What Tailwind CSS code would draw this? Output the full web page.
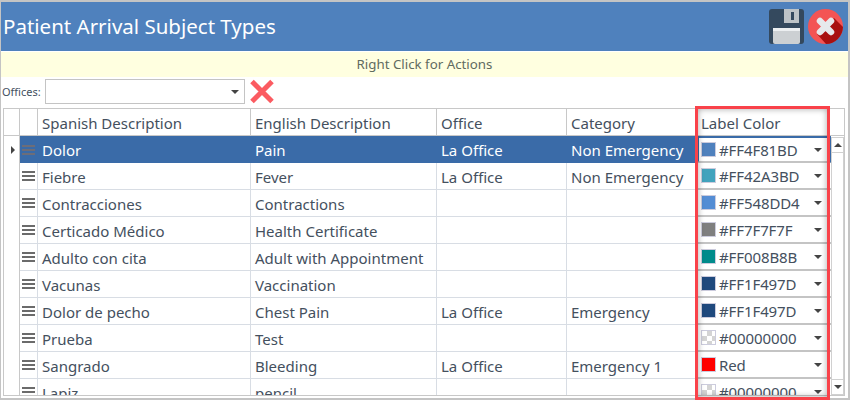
<!DOCTYPE html>
<html><head><script src="https://cdn.jsdelivr.net/npm/@tailwindcss/browser@4"></script></head>
<body class="bg-white">
<div class="relative w-[850px] h-[400px] overflow-hidden bg-white font-['Noto_Sans','Open_Sans',sans-serif] text-[#44505e]">
  <div class="flex flex-col h-[400px] border-t-2 border-l border-r-2 border-b-2 border-[#c4c4c4]">
    <header class="h-[49px] shrink-0 bg-[#4f81bd] flex items-center justify-between pl-[2px] pr-[5px]">
      <h1 class="text-[20.5px] text-white">Patient Arrival Subject Types</h1>
      <div class="flex items-center gap-[4px]">
        <svg width="35" height="35" viewBox="0 0 35 35"><rect width="35" height="35" rx="3" fill="#34495e"/><rect x="15" y="0" width="15" height="14" fill="#bdc3c7"/><rect x="22" y="3" width="3" height="8" fill="#34495e"/><rect x="4" y="19" width="27" height="16" rx="2" fill="#ccd0d3"/><rect x="4" y="19" width="27" height="3" fill="#eceff1"/></svg>
        <svg width="35" height="35" viewBox="0 0 35 35"><circle cx="17.5" cy="17.5" r="17.5" fill="#f35454"/><path d="M9 25 L18 35 A17.5 17.5 0 0 0 35 18 L26 9z" fill="#a81010"/><path d="M12 12L23 23M23 12L12 23" stroke="#e6e9ec" stroke-width="6.5" stroke-linecap="round"/></svg>
      </div>
    </header>
    <div class="mt-px h-[25px] shrink-0 bg-[#ffffe0] flex items-center justify-center text-[13.3px] text-[#5f6b5f]">Right Click for Actions</div>
    <div class="h-[31px] shrink-0 flex items-start pt-[2px]">
      <span class="text-[11px] w-[44px] pl-px leading-[25px]">Offices:</span>
      <div class="w-[200px] h-[25px] border border-[#c4c4c4] flex items-center justify-end pr-[5px]"><span class="w-0 h-0 border-x-4 border-t-4 border-x-transparent border-t-[#444]"></span></div>
      <svg class="ml-[4px]" width="26" height="25" viewBox="0 0 26 25"><path d="M3 2.5L23 22.5M23 2.5L3 22.5" stroke="#fb5b61" stroke-width="5"/></svg>
    </div>
    <div class="flex-1 min-h-0 ml-[2px] mr-[3px] mb-[2px] border border-[#c8c8c8] flex flex-col text-[15px] overflow-hidden">
      <div class="grid grid-cols-[16px_18px_213px_186px_130px_130px_1fr] grid-rows-[26px] h-[27px] shrink-0 border-b border-[#c8c8c8] leading-[28px]">
        <div class="border-r border-[#c8c8c8]"></div><div class="border-r border-[#c8c8c8]"></div>
        <div class="border-r border-[#c8c8c8] pl-[4px]">Spanish Description</div>
        <div class="border-r border-[#c8c8c8] pl-[4px]">English Description</div>
        <div class="border-r border-[#c8c8c8] pl-[4px]">Office</div>
        <div class="border-r border-[#c8c8c8] pl-[4px]">Category</div>
        <div class="pl-[4px]">Label Color</div>
      </div>
      <div class="flex-1 min-h-0 flex overflow-hidden">
        <div class="w-[827px] shrink-0">

          <div class="grid grid-cols-[16px_18px_213px_186px_130px_130px_134px] grid-rows-[27px] h-[27px] leading-[28px] text-white">
            <div class="border-r border-[#c8c8c8] flex items-center justify-center text-[#444]"><span class="w-0 h-0 border-y-[4px] border-l-[4px] border-y-transparent border-l-[#444] ml-[2px]"></span></div>
            <div class="bg-[#3a6ba8] flex flex-col items-center justify-center gap-[2px] pr-px"><i class="block w-[13px] h-[2px] bg-[#6d6d78]"></i><i class="block w-[13px] h-[2px] bg-[#6d6d78]"></i><i class="block w-[13px] h-[2px] bg-[#6d6d78]"></i></div>
            <div class="bg-[#3a6ba8] pl-[4px]">Dolor</div>
            <div class="bg-[#3a6ba8] pl-[4px]">Pain</div>
            <div class="bg-[#3a6ba8] pl-[4px]">La Office</div>
            <div class="bg-[#3a6ba8] pl-[4px]">Non Emergency</div>
            <div class="border-2 border-[#3a6ba8] border-b-[#c4c4c4] flex items-center pl-[2px] pr-[7px] text-[#44505e]"><i class="block w-[15px] h-[15px] border border-[#ccd] bg-[#4f81bd] mr-[3px]"></i><span class="flex-1 tracking-[-0.1px] leading-[24px]">#FF4F81BD</span><span class="w-0 h-0 border-x-4 border-t-4 border-x-transparent border-t-[#444]"></span></div>
          </div>

          <div class="grid grid-cols-[16px_18px_213px_186px_130px_130px_134px] grid-rows-[27px] h-[27px] leading-[28px]">
            <div class="border-r border-[#c8c8c8]"></div>
            <div class="border-r border-b border-[#d8dde4] flex flex-col items-center justify-center gap-[2px]"><i class="block w-[13px] h-[2px] bg-[#6b6b6b]"></i><i class="block w-[13px] h-[2px] bg-[#6b6b6b]"></i><i class="block w-[13px] h-[2px] bg-[#6b6b6b]"></i></div>
            <div class="border-r border-b border-[#d8dde4] pl-[4px]">Fiebre</div>
            <div class="border-r border-b border-[#d8dde4] pl-[4px]">Fever</div>
            <div class="border-r border-b border-[#d8dde4] pl-[4px]">La Office</div>
            <div class="border-r border-b border-[#d8dde4] pl-[4px]">Non Emergency</div>
            <div class="border-b-2 border-[#c4c4c4] flex items-center pl-[4px] pr-[9px]"><i class="block w-[15px] h-[15px] border border-[#ccd] bg-[#42a3bd] mr-[3px]"></i><span class="flex-1 tracking-[-0.1px] leading-[24px]">#FF42A3BD</span><span class="w-0 h-0 border-x-4 border-t-4 border-x-transparent border-t-[#444]"></span></div>
          </div>

          <div class="grid grid-cols-[16px_18px_213px_186px_130px_130px_134px] grid-rows-[27px] h-[27px] leading-[28px]">
            <div class="border-r border-[#c8c8c8]"></div>
            <div class="border-r border-b border-[#d8dde4] flex flex-col items-center justify-center gap-[2px]"><i class="block w-[13px] h-[2px] bg-[#6b6b6b]"></i><i class="block w-[13px] h-[2px] bg-[#6b6b6b]"></i><i class="block w-[13px] h-[2px] bg-[#6b6b6b]"></i></div>
            <div class="border-r border-b border-[#d8dde4] pl-[4px]">Contracciones</div>
            <div class="border-r border-b border-[#d8dde4] pl-[4px]">Contractions</div>
            <div class="border-r border-b border-[#d8dde4] pl-[4px]"></div>
            <div class="border-r border-b border-[#d8dde4] pl-[4px]"></div>
            <div class="border-b-2 border-[#c4c4c4] flex items-center pl-[4px] pr-[9px]"><i class="block w-[15px] h-[15px] border border-[#ccd] bg-[#548dd4] mr-[3px]"></i><span class="flex-1 tracking-[-0.1px] leading-[24px]">#FF548DD4</span><span class="w-0 h-0 border-x-4 border-t-4 border-x-transparent border-t-[#444]"></span></div>
          </div>

          <div class="grid grid-cols-[16px_18px_213px_186px_130px_130px_134px] grid-rows-[27px] h-[27px] leading-[28px]">
            <div class="border-r border-[#c8c8c8]"></div>
            <div class="border-r border-b border-[#d8dde4] flex flex-col items-center justify-center gap-[2px]"><i class="block w-[13px] h-[2px] bg-[#6b6b6b]"></i><i class="block w-[13px] h-[2px] bg-[#6b6b6b]"></i><i class="block w-[13px] h-[2px] bg-[#6b6b6b]"></i></div>
            <div class="border-r border-b border-[#d8dde4] pl-[4px]">Certicado Médico</div>
            <div class="border-r border-b border-[#d8dde4] pl-[4px]">Health Certificate</div>
            <div class="border-r border-b border-[#d8dde4] pl-[4px]"></div>
            <div class="border-r border-b border-[#d8dde4] pl-[4px]"></div>
            <div class="border-b-2 border-[#c4c4c4] flex items-center pl-[4px] pr-[9px]"><i class="block w-[15px] h-[15px] border border-[#ccd] bg-[#7f7f7f] mr-[3px]"></i><span class="flex-1 tracking-[-0.1px] leading-[24px]">#FF7F7F7F</span><span class="w-0 h-0 border-x-4 border-t-4 border-x-transparent border-t-[#444]"></span></div>
          </div>

          <div class="grid grid-cols-[16px_18px_213px_186px_130px_130px_134px] grid-rows-[27px] h-[27px] leading-[28px]">
            <div class="border-r border-[#c8c8c8]"></div>
            <div class="border-r border-b border-[#d8dde4] flex flex-col items-center justify-center gap-[2px]"><i class="block w-[13px] h-[2px] bg-[#6b6b6b]"></i><i class="block w-[13px] h-[2px] bg-[#6b6b6b]"></i><i class="block w-[13px] h-[2px] bg-[#6b6b6b]"></i></div>
            <div class="border-r border-b border-[#d8dde4] pl-[4px]">Adulto con cita</div>
            <div class="border-r border-b border-[#d8dde4] pl-[4px]">Adult with Appointment</div>
            <div class="border-r border-b border-[#d8dde4] pl-[4px]"></div>
            <div class="border-r border-b border-[#d8dde4] pl-[4px]"></div>
            <div class="border-b-2 border-[#c4c4c4] flex items-center pl-[4px] pr-[9px]"><i class="block w-[15px] h-[15px] border border-[#ccd] bg-[#008b8b] mr-[3px]"></i><span class="flex-1 tracking-[-0.1px] leading-[24px]">#FF008B8B</span><span class="w-0 h-0 border-x-4 border-t-4 border-x-transparent border-t-[#444]"></span></div>
          </div>

          <div class="grid grid-cols-[16px_18px_213px_186px_130px_130px_134px] grid-rows-[27px] h-[27px] leading-[28px]">
            <div class="border-r border-[#c8c8c8]"></div>
            <div class="border-r border-b border-[#d8dde4] flex flex-col items-center justify-center gap-[2px]"><i class="block w-[13px] h-[2px] bg-[#6b6b6b]"></i><i class="block w-[13px] h-[2px] bg-[#6b6b6b]"></i><i class="block w-[13px] h-[2px] bg-[#6b6b6b]"></i></div>
            <div class="border-r border-b border-[#d8dde4] pl-[4px]">Vacunas</div>
            <div class="border-r border-b border-[#d8dde4] pl-[4px]">Vaccination</div>
            <div class="border-r border-b border-[#d8dde4] pl-[4px]"></div>
            <div class="border-r border-b border-[#d8dde4] pl-[4px]"></div>
            <div class="border-b-2 border-[#c4c4c4] flex items-center pl-[4px] pr-[9px]"><i class="block w-[15px] h-[15px] border border-[#ccd] bg-[#1f497d] mr-[3px]"></i><span class="flex-1 tracking-[-0.1px] leading-[24px]">#FF1F497D</span><span class="w-0 h-0 border-x-4 border-t-4 border-x-transparent border-t-[#444]"></span></div>
          </div>

          <div class="grid grid-cols-[16px_18px_213px_186px_130px_130px_134px] grid-rows-[27px] h-[27px] leading-[28px]">
            <div class="border-r border-[#c8c8c8]"></div>
            <div class="border-r border-b border-[#d8dde4] flex flex-col items-center justify-center gap-[2px]"><i class="block w-[13px] h-[2px] bg-[#6b6b6b]"></i><i class="block w-[13px] h-[2px] bg-[#6b6b6b]"></i><i class="block w-[13px] h-[2px] bg-[#6b6b6b]"></i></div>
            <div class="border-r border-b border-[#d8dde4] pl-[4px]">Dolor de pecho</div>
            <div class="border-r border-b border-[#d8dde4] pl-[4px]">Chest Pain</div>
            <div class="border-r border-b border-[#d8dde4] pl-[4px]">La Office</div>
            <div class="border-r border-b border-[#d8dde4] pl-[4px]">Emergency</div>
            <div class="border-b-2 border-[#c4c4c4] flex items-center pl-[4px] pr-[9px]"><i class="block w-[15px] h-[15px] border border-[#ccd] bg-[#1f497d] mr-[3px]"></i><span class="flex-1 tracking-[-0.1px] leading-[24px]">#FF1F497D</span><span class="w-0 h-0 border-x-4 border-t-4 border-x-transparent border-t-[#444]"></span></div>
          </div>

          <div class="grid grid-cols-[16px_18px_213px_186px_130px_130px_134px] grid-rows-[27px] h-[27px] leading-[28px]">
            <div class="border-r border-[#c8c8c8]"></div>
            <div class="border-r border-b border-[#d8dde4] flex flex-col items-center justify-center gap-[2px]"><i class="block w-[13px] h-[2px] bg-[#6b6b6b]"></i><i class="block w-[13px] h-[2px] bg-[#6b6b6b]"></i><i class="block w-[13px] h-[2px] bg-[#6b6b6b]"></i></div>
            <div class="border-r border-b border-[#d8dde4] pl-[4px]">Prueba</div>
            <div class="border-r border-b border-[#d8dde4] pl-[4px]">Test</div>
            <div class="border-r border-b border-[#d8dde4] pl-[4px]"></div>
            <div class="border-r border-b border-[#d8dde4] pl-[4px]"></div>
            <div class="border-b-2 border-[#c4c4c4] flex items-center pl-[4px] pr-[9px]"><i class="block w-[15px] h-[15px] border border-[#ccd] bg-[conic-gradient(#d4d4d4_25%,#fff_0_50%,#d4d4d4_0_75%,#fff_0)] bg-[length:10px_10px] mr-[3px]"></i><span class="flex-1 tracking-[-0.1px] leading-[24px]">#00000000</span><span class="w-0 h-0 border-x-4 border-t-4 border-x-transparent border-t-[#444]"></span></div>
          </div>

          <div class="grid grid-cols-[16px_18px_213px_186px_130px_130px_134px] grid-rows-[27px] h-[27px] leading-[28px]">
            <div class="border-r border-[#c8c8c8]"></div>
            <div class="border-r border-b border-[#d8dde4] flex flex-col items-center justify-center gap-[2px]"><i class="block w-[13px] h-[2px] bg-[#6b6b6b]"></i><i class="block w-[13px] h-[2px] bg-[#6b6b6b]"></i><i class="block w-[13px] h-[2px] bg-[#6b6b6b]"></i></div>
            <div class="border-r border-b border-[#d8dde4] pl-[4px]">Sangrado</div>
            <div class="border-r border-b border-[#d8dde4] pl-[4px]">Bleeding</div>
            <div class="border-r border-b border-[#d8dde4] pl-[4px]">La Office</div>
            <div class="border-r border-b border-[#d8dde4] pl-[4px]">Emergency 1</div>
            <div class="border-b-2 border-[#c4c4c4] flex items-center pl-[4px] pr-[9px]"><i class="block w-[15px] h-[15px] border border-[#ccd] bg-[#ff0000] mr-[3px]"></i><span class="flex-1 tracking-[-0.1px] leading-[24px]">Red</span><span class="w-0 h-0 border-x-4 border-t-4 border-x-transparent border-t-[#444]"></span></div>
          </div>

          <div class="grid grid-cols-[16px_18px_213px_186px_130px_130px_134px] grid-rows-[27px] h-[27px] leading-[28px]">
            <div class="border-r border-[#c8c8c8]"></div>
            <div class="border-r border-b border-[#d8dde4] flex flex-col items-center justify-center gap-[2px]"><i class="block w-[13px] h-[2px] bg-[#6b6b6b]"></i><i class="block w-[13px] h-[2px] bg-[#6b6b6b]"></i><i class="block w-[13px] h-[2px] bg-[#6b6b6b]"></i></div>
            <div class="border-r border-b border-[#d8dde4] pl-[4px]">Lapiz</div>
            <div class="border-r border-b border-[#d8dde4] pl-[4px]">pencil</div>
            <div class="border-r border-b border-[#d8dde4] pl-[4px]"></div>
            <div class="border-r border-b border-[#d8dde4] pl-[4px]"></div>
            <div class="border-b-2 border-[#c4c4c4] flex items-center pl-[4px] pr-[9px]"><i class="block w-[15px] h-[15px] border border-[#ccd] bg-[conic-gradient(#d4d4d4_25%,#fff_0_50%,#d4d4d4_0_75%,#fff_0)] bg-[length:10px_10px] mr-[3px]"></i><span class="flex-1 tracking-[-0.1px] leading-[24px]">#00000000</span><span class="w-0 h-0 border-x-4 border-t-4 border-x-transparent border-t-[#444]"></span></div>
          </div>

        </div>
        <div class="flex-1 flex flex-col justify-between border border-[#d0d0d0] mt-px">
          <div class="h-[15px] border-b border-[#d0d0d0] flex items-center justify-center"><span class="w-0 h-0 border-x-4 border-b-4 border-x-transparent border-b-[#444]"></span></div>
          <div class="h-[15px] border-t border-[#d0d0d0] flex items-center justify-center"><span class="w-0 h-0 border-x-4 border-t-4 border-x-transparent border-t-[#444]"></span></div>
        </div>
      </div>
    </div>
  </div>
  <div class="absolute left-[695px] top-[106px] w-[135px] h-[294px] border-[3px] border-[#f9424a] shadow-[inset_0_0_6px_rgba(0,0,0,0.35)] pointer-events-none"></div>
</div>
</body></html>
